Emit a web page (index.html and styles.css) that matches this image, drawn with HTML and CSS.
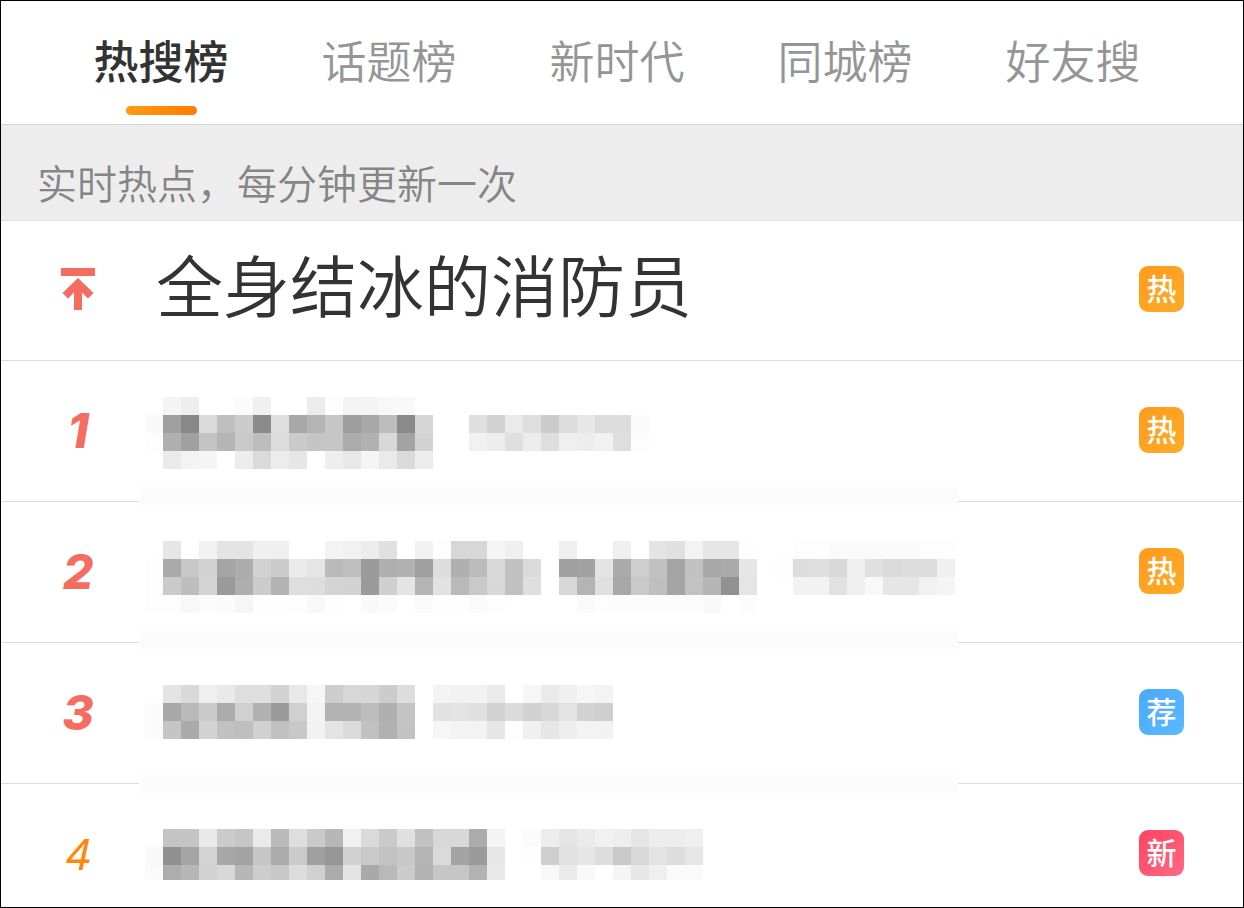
FILE: index.html
```html
<!DOCTYPE html>
<html lang="zh-CN">
<head>
  <meta charset="UTF-8" />
  <meta name="viewport" content="width=device-width, initial-scale=1" />
  <title>热搜榜</title>
  <link rel="stylesheet" href="styles.css">
</head>
<body>
  <div class="page">
    <nav class="tabs">
      <button class="tab active" type="button">热搜榜</button>
      <button class="tab" type="button">话题榜</button>
      <button class="tab" type="button">新时代</button>
      <button class="tab" type="button">同城榜</button>
      <button class="tab" type="button">好友搜</button>
    </nav>

    <p class="notice">实时热点，每分钟更新一次</p>

    <!-- 置顶 -->
    <div class="item pinned">
      <span class="rank">
        <svg class="top-icon" viewBox="0 0 34 42" aria-hidden="true">
          <path d="M0 0h34v8H0z M17 10L32.500 25l-5.500 5.500-6-6V42h-8V24.500l-6 6L1.500 25z" />
        </svg>
      </span>
      <a class="title" href="#">全身结冰的消防员</a>
      <span class="badge hot">热</span>
    </div>

    <div class="list">
      <div class="item">
        <span class="rank">1</span>
        <span class="badge hot">热</span>
      </div>
      <div class="item">
        <span class="rank">2</span>
        <span class="badge hot">热</span>
      </div>
      <div class="item">
        <span class="rank">3</span>
        <span class="badge rec">荐</span>
      </div>
      <div class="item">
        <span class="rank normal">4</span>
        <span class="badge new">新</span>
      </div>
      <!-- 马赛克遮挡层 -->
      <svg class="mosaic" id="mosaic" width="819" height="483" shape-rendering="crispEdges" aria-hidden="true"></svg>
    </div>
  </div>

  <script src="mosaic.js"></script>
</body>
</html>
```
FILE: styles.css
```css
* {
  box-sizing: border-box;
}
body {
  margin: 0;
  font-family: "Noto Sans CJK SC", sans-serif;
  background: #fff;
  color: #333;
}
.page {
  height: 100vh;
  border: 1px solid #000;
  overflow: hidden;
}

/* 顶部标签 */
.tabs {
  display: flex;
  height: 124px;
  padding: 0 56px 0 46px;
  border-bottom: 1px solid #d6d6d6;
}
.tab {
  flex: 1;
  display: flex;
  flex-direction: column;
  align-items: center;
  padding: 26px 0 0;
  border: none;
  background: none;
  color: #959595;
  font-family: inherit;
  font-size: 45px;
  font-weight: 350;
  line-height: 66px;
  cursor: pointer;
}
.tab.active {
  color: #333;
  font-weight: 500;
}
.tab.active::after {
  content: "";
  width: 71px;
  height: 9px;
  margin-top: 13px;
  border-radius: 5px;
  background: linear-gradient(135deg, #ff9d14, #ff7800);
}

.notice {
  height: 96px;
  margin: 0;
  padding: 28px 36px 0;
  border-bottom: 1px solid #e2e2e2;
  background: #ededed;
  color: #858585;
  font-size: 40px;
  font-weight: 350;
  line-height: 58px;
}

/* 列表 */
.list {
  position: relative;
}
.item {
  display: flex;
  align-items: center;
  height: 141px;
  padding: 0 59px 2px 0;
  border-bottom: 1px solid #dcdcdc;
}
.item.pinned {
  height: 140px;
  padding-bottom: 4px;
}
.rank {
  width: 154px;
  color: #f56c60;
  font-family: Inter, sans-serif;
  font-size: 48px;
  font-style: italic;
  font-weight: 800;
  text-align: center;
}
.rank.normal {
  color: #ff860a;
  font-family: "Noto Sans", sans-serif;
  font-size: 44px;
  font-weight: 400;
}
.top-icon {
  display: block;
  width: 34px;
  height: 42px;
  margin: 0 auto;
  fill: #f56c60;
}
.title {
  padding: 0 0 12px 1px;
  color: #333;
  font-size: 67px;
  font-weight: 350;
  line-height: 96px;
  text-decoration: none;
}
.badge {
  width: 45px;
  height: 46px;
  margin-left: auto;
  border-radius: 9px;
  color: #fff;
  font-size: 30px;
  font-weight: 500;
  line-height: 43px;
  text-align: center;
}
.hot {
  background: linear-gradient(135deg, #ff9a1c, #ffac28);
}
.rec {
  background: linear-gradient(135deg, #4ba9fc, #59baff);
}
.new {
  background: linear-gradient(135deg, #fd4360, #ff6985);
}

.mosaic {
  position: absolute;
  top: 36px;
  left: 138px;
}
```
FILE: mosaic.js
```javascript
// 每格 18px，数值为灰度，-- 为空白
const CELL = 18;
const START_X = 6;

const blocks = [
  { row: 0, cells: [
    '-- f4 ee -- -- fb f0 -- -- ec fd f3 f4 f8 f9',
    'f9 9f 88 da bf cc 8b de a8 b5 c6 9d a8 bd 8a d6 -- -- df d2 ea de cb dc e7 dc dd fa',
    'fd b0 a0 c4 b5 ca bd dc ca c5 c6 ab b1 d8 a3 d3 -- -- f1 ed df ec de ef ed f1 de fd',
    '-- ea f3 f5 -- ed da ec e6 -- ee e8 f5 ea da ec'
  ] },
  { row: 8, cells: [
    '-- e6 -- f2 e4 e4 f0 f0 -- -- f3 f1 ec e0 -- f2 fd d7 d7 f5 f0 -- -- ef -- -- f0 -- e4 e0 f3 e6 e6 fe -- -- fd fd fa fa fa fa fa fd fd',
    'fd aa c8 d3 a5 ac d2 cc eb e5 ba bf 9b af b1 9f dd b0 bc d9 c1 da -- a0 a2 e3 aa ce c1 a4 c1 a8 aa e6 -- fd dd de d9 ef e0 db dd dd f0',
    'fd ca be d4 9a ae cc b3 de dd d4 d3 9b cf e4 b4 e2 b9 c9 d8 c1 de -- d8 b4 e0 a8 c9 bf a5 c2 b5 91 e5 -- -- f2 f2 e1 ef f8 e6 e6 f1 f5',
    'fd fd f8 fc fb f6 fe fe fd f8 fe -- f9 fb -- fa fe fe fa fd -- -- -- -- fa fd fc fc fc fc fc f9 -- fc'
  ] },
  { row: 16, cells: [
    '-- e4 d9 ef e9 de de d3 e8 f6 cd d7 d6 cc dd -- f4 f2 f2 ea -- f6 ea f0 f6 f3',
    'fb a8 b9 ca ab d0 b1 9b d0 f3 b2 b3 bd b0 c4 -- e2 e3 e0 d2 db d1 d7 e3 d2 cf',
    'fb c5 aa d3 c1 bf d1 c1 c8 f2 e4 da c1 b1 c3 -- f6 f3 f3 e6 fd f0 e6 ee f3 f2'
  ] },
  { row: 24, cells: [
    '-- c4 c5 e9 cb c6 ea ba de ca b7 f1 da ca e0 c1 d8 d8 ab f4 -- fb ed e5 eb f1 ee e5 ed ed ef',
    'f9 90 a5 d4 a7 a3 c6 ac cb a0 96 d1 c9 c3 c8 b4 da a3 9b e7 -- fe cf e1 e6 dd c9 d9 e3 dd e7',
    'fb ad b6 d3 d8 b7 cd c7 dc d0 ab e4 a9 b9 cb b2 c6 c6 b2 e8 -- -- f8 ea f9 -- f5 e7 ef fa fa'
  ] }
];

const mosaic = document.getElementById('mosaic');
const width = Number(mosaic.getAttribute('width'));
const height = Number(mosaic.getAttribute('height'));

function addRect(x, y, w, h, fill) {
  const rect = document.createElementNS('http://www.w3.org/2000/svg', 'rect');
  rect.setAttribute('x', x);
  rect.setAttribute('y', y);
  rect.setAttribute('width', w);
  rect.setAttribute('height', h);
  rect.setAttribute('fill', fill);
  mosaic.appendChild(rect);
}

addRect(0, 0, width, height, '#fff');

// 被打码的分隔线
[5, 13, 21].forEach((row) => {
  addRect(0, row * CELL, width, CELL, '#fcfcfc');
});

blocks.forEach((block) => {
  block.cells.forEach((line, i) => {
    line.split(' ').forEach((v, col) => {
      if (v === '--') return;
      addRect(START_X + col * CELL, (block.row + i) * CELL, CELL, CELL, '#' + v + v + v);
    });
  });
});
```
